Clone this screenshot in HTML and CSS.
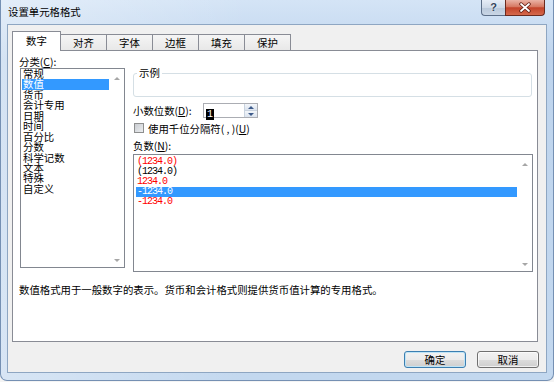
FILE: index.html
```html
<!DOCTYPE html>
<html>
<head>
    <meta charset="utf-8">
    <title>设置单元格格式</title>
    <link rel="stylesheet" href="styles.css">
</head>
<body>
<div class="window">
    <div class="titlebar">
        <span class="title">设置单元格格式</span>
        <div class="caption-btns">
            <div class="cap help">?</div>
            <div class="cap close">
                <svg width="14" height="11" viewBox="0 0 14 11">
                    <path d="M3 2 L11 9 M11 2 L3 9" stroke="#5b1a10" stroke-width="3.4" stroke-linecap="round"/>
                    <path d="M3 2 L11 9 M11 2 L3 9" stroke="#fff" stroke-width="1.8" stroke-linecap="round"/>
                </svg>
            </div>
        </div>
    </div>

    <div class="client">
        <ul class="tabs">
            <li class="tab current">数字</li>
            <li class="tab">对齐</li>
            <li class="tab">字体</li>
            <li class="tab">边框</li>
            <li class="tab">填充</li>
            <li class="tab">保护</li>
        </ul>

        <div class="panel">
            <div class="panel-main">
                <div class="col-left">
                    <div class="label">分类(<u>C</u>):</div>
                    <div class="listbox cat">
                        <ul class="items">
                            <li>常规</li>
                            <li class="current">数值</li>
                            <li>货币</li>
                            <li>会计专用</li>
                            <li>日期</li>
                            <li>时间</li>
                            <li>百分比</li>
                            <li>分数</li>
                            <li>科学记数</li>
                            <li>文本</li>
                            <li>特殊</li>
                            <li>自定义</li>
                        </ul>
                        <div class="vscroll"><i class="up"></i><i class="down"></i></div>
                    </div>
                </div>

                <div class="col-right">
                    <fieldset class="sample">
                        <legend>示例</legend>
                        <div class="sample-body"></div>
                    </fieldset>

                    <div class="row decimals">
                        <span class="row-label">小数位数(<u>D</u>):</span>
                        <div class="spin">
                            <div class="spin-val"><span class="sel">1</span></div>
                            <div class="spin-btns">
                                <div class="spin-half"><i class="up"></i></div>
                                <div class="spin-half"><i class="down"></i></div>
                            </div>
                        </div>
                    </div>

                    <div class="row thousands">
                        <span class="check"></span>
                        <span>使用千位分隔符( , )(<u>U</u>)</span>
                    </div>

                    <div class="label neg-label">负数(<u>N</u>):</div>
                    <div class="listbox neg">
                        <ul class="items">
                            <li class="red">(1234.0)</li>
                            <li>(1234.0)</li>
                            <li class="red">1234.0</li>
                            <li class="current">-1234.0</li>
                            <li class="red">-1234.0</li>
                        </ul>
                        <div class="vscroll"><i class="up"></i><i class="down"></i></div>
                    </div>
                </div>
            </div>
            <p class="desc">数值格式用于一般数字的表示。货币和会计格式则提供货币值计算的专用格式。</p>
        </div>

        <div class="footer">
            <button class="btn default">确定</button>
            <button class="btn">取消</button>
        </div>
    </div>
</div>
</body>
</html>
```

FILE: styles.css
```css
html,body,div,span,ul,li,p,fieldset,legend{margin:0;padding:0;}
ul,li{list-style:none;}
*{box-sizing:border-box;}
body{
    background:#f4f4f4;
    font-family:"Noto Sans CJK SC","Liberation Sans",sans-serif;
    font-size:10.4px; color:#000;
}
u{text-decoration:underline;}

/* 窗口外框 */
.window{
    width:554px; height:381px;
    display:flex; flex-direction:column;
    background:linear-gradient(90deg,rgba(255,255,255,.35),rgba(255,255,255,0) 45%),linear-gradient(#d4e4f6,#bed4ed 60px,#c3d8ef);
    border:1px solid #7590b3; border-top:none;
    border-radius:0 0 7px 7px;
}
.titlebar{
    height:24px; display:flex; justify-content:space-between;
    padding:0 8px 0 7px;
}
.title{line-height:23px;}
.caption-btns{display:flex; align-items:flex-start;}
.cap{height:16px; border:1px solid #5d6f88; border-top:none;}
.help{
    width:24px; border-radius:0 0 0 4px; border-right:none;
    background:linear-gradient(#e6edf6,#cfdae8 50%,#b9c8da 51%,#c9d6e5);
    font:bold 11px/15px "Liberation Sans",sans-serif; color:#34445a;
    text-align:center; text-shadow:0 0 2px #fff;
}
.close{
    width:40px; border-radius:0 0 4px 0; border-color:#6b2a1e;
    background:linear-gradient(#eab3a6,#d67862 45%,#c3432a 52%,#d5694c);
    display:flex; align-items:center; justify-content:center;
}

/* 客户区 */
.client{
    width:540px; height:349px; margin-left:6px;
    background:#f0f0f0; border:1px solid #8ea6c2;
    padding:6px 8px 0 4px;
    display:flex; flex-direction:column;
}

/* 选项卡 */
.tabs{display:flex; align-items:flex-end; height:19px;}
.tab{
    width:47px; height:16px; margin-left:-1px;
    border:1px solid #898c95; border-bottom:none;
    background:linear-gradient(#f5f5f5,#e8e8e8);
    text-align:center; line-height:15px;
}
.tab.current{
    width:49px; height:20px; margin-left:0; margin-bottom:-1px;
    background:#fff; line-height:17px;
    position:relative; z-index:2;
}
.tab.current + .tab{margin-left:-1px;}

.panel{
    height:292px; background:#fff;
    border:1px solid #898c95;
    padding:5px 4px 0 6px;
    position:relative; z-index:1;
}
.panel-main{display:flex;}
.label{line-height:12px; height:12px;}

/* 列表框 */
.listbox{
    display:flex; background:#fff;
    border:1px solid #828790;
}
.listbox .items{flex:1; padding:0 1px;}
.listbox .items li{white-space:nowrap; padding-left:1px;}
.listbox .items li.current{background:#3399ff; color:#fff;}
.vscroll{
    width:14px; display:flex; flex-direction:column;
    justify-content:space-between; align-items:center;
    padding:8px 0 5px;
}
.vscroll .up{border-left:3px solid transparent; border-right:3px solid transparent; border-bottom:3px solid #a6a6a6;}
.vscroll .down{border-left:3px solid transparent; border-right:3px solid transparent; border-top:3px solid #a6a6a6;}

.col-left{width:106px;}
.cat{width:105px; height:200px; margin-left:1px;}
.cat .items li{line-height:10.45px; height:10.45px;}

.col-right{width:400px; margin-left:8px; padding-top:11px;}

/* 示例分组框 */
.sample{
    width:399px; border:1px solid #d5dfe5; border-radius:3px;
    padding:0 3px;
}
.sample legend{line-height:12px; padding:0 2px;}
.sample-body{height:17px;}

.row{display:flex; align-items:center;}
.decimals{margin-top:6px; height:15px;}
.row-label{width:70px;}
.spin{
    width:55px; height:15px; display:flex;
    border:1px solid #abadb3; background:#fff;
}
.spin-val{flex:1; padding:1px 0 0 2px;}
.spin-val .sel{
    display:inline-block; background:#000; color:#fff;
    font:10px/11px "Liberation Mono",monospace; padding:0 1px;
}
.spin-btns{width:13px; display:flex; flex-direction:column; border-left:1px solid #c9d3df;}
.spin-half{
    flex:1; display:flex; align-items:center; justify-content:center;
    background:linear-gradient(#f3f6fa,#dbe3ee);
}
.spin-half + .spin-half{border-top:1px solid #c9d3df;}
.spin-half .up{border-left:3px solid transparent; border-right:3px solid transparent; border-bottom:3px solid #3d5a8a;}
.spin-half .down{border-left:3px solid transparent; border-right:3px solid transparent; border-top:3px solid #3d5a8a;}

.thousands{margin-top:5px; height:10px; padding-left:1px;}
.check{
    width:10px; height:10px; margin-right:4px;
    border:1px solid #8e8f8f;
    background:linear-gradient(135deg,#c9ccd1,#eceef0);
}

.neg-label{margin-top:7px;}
.neg{height:118px; margin-top:2px;}
.neg .items{padding:2px 1px 0 1px;}
.neg .items li{
    height:10px; line-height:10px; margin-left:1px;
    font-family:"Liberation Mono",monospace; font-size:10px; letter-spacing:-1px;
}
.neg .items li.red{color:#ff0000;}

.desc{margin-top:12px; line-height:12px;}

/* 底部按钮 */
.footer{display:flex; justify-content:flex-end; gap:11px; margin-top:9px; margin-right:-1px;}
.btn{
    width:62px; height:17px; padding:0;
    font-family:"Noto Sans CJK SC",sans-serif; font-size:10.4px; color:#000;
    border:1px solid #707070; border-radius:3px;
    background:linear-gradient(#f2f2f2,#ebebeb 50%,#dddddd 51%,#cfcfcf);
    box-shadow:inset 0 0 0 1px rgba(255,255,255,.7);
}
.btn.default{border-color:#3c7fb1; box-shadow:inset 0 0 0 1px #bfe4f6;}
```
